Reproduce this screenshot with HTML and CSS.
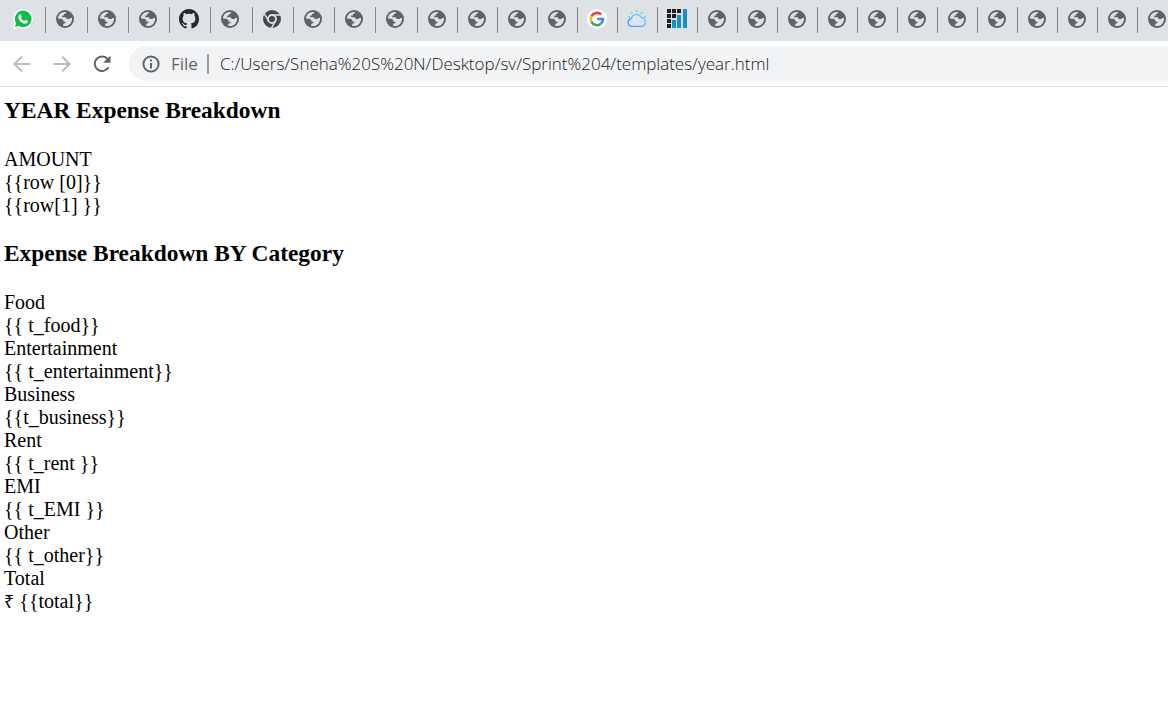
FILE: index.html
```html
<!DOCTYPE html>
<html lang="en">
<head>
<meta charset="utf-8">
<title>year.html</title>
<link rel="stylesheet" href="styles.css">
</head>
<body>
<svg class="sprite" aria-hidden="true">
  <symbol id="globe" viewBox="0 0 20 20">
    <circle cx="10" cy="10" r="9" fill="#5f6368"/>
    <path fill="#dee1e6" d="M2.900 9.600C3 6.200 5.800 3 9.700 2.900L11.200 3.100C11.100 4.500 10 4.900 9 5.100L8.900 6.600H7.200V8.200H10.200C11.200 8.200 11.500 8.900 11.600 10H13.900C14.700 10 15 9.500 15.300 9H17C17.500 13.400 14.200 17.100 10.200 17.100H8.200V15.400C8.300 14.400 9.400 14.300 10.400 14.200L10.500 12.700H8.800C8.400 10.700 7.300 9.800 5.700 9.700Z"/>
  </symbol>
</svg>
<header>
  <nav class="tabs" aria-label="Tabs">
    <button class="tab extra" aria-label="WhatsApp"><svg viewBox="0 0 20 20"><path fill="#fff" d="M10 0a10 10 0 1 1-4.600 18.900L.2 20l1.400-5A10 10 0 0 1 10 0Z"/><path fill="#0bc143" d="M10.200 1.600a8.300 8.300 0 1 1-4.300 15.400L2 18l1.100-3.800A8.300 8.300 0 0 1 10.200 1.600Z"/><path fill="#fff" d="M6.700 5.300h1.100l1 2.300-.9 1.300c.8 1.500 1.900 2.500 3.500 3.200l1.200-1.300 2.300 1.100c.1 1.800-1.200 2.700-2.600 2.700-3.600-.4-6.500-3.300-7-6.400 0-1.300.6-2.300 1.400-2.900Z"/></svg></button>
    <button class="tab extra" aria-label="Tab"><svg><use href="#globe"/></svg></button>
    <button class="tab wide" aria-label="Tab"><svg><use href="#globe"/></svg></button>
    <button class="tab wide" aria-label="Tab"><svg><use href="#globe"/></svg></button>
    <button class="tab wide" aria-label="GitHub"><svg viewBox="0 0 16 16"><path fill="#24292f" d="M8 0C3.580 0 0 3.580 0 8c0 3.540 2.290 6.530 5.470 7.590.4.070.55-.17.55-.38 0-.19-.01-.82-.01-1.490-2.010.37-2.530-.49-2.690-.94-.09-.23-.48-.94-.82-1.130-.28-.15-.68-.52-.01-.53.63-.01 1.080.58 1.230.82.72 1.210 1.870.87 2.330.66.07-.52.28-.87.51-1.070-1.780-.2-3.640-.89-3.640-3.950 0-.87.31-1.590.82-2.150-.08-.2-.36-1.020.08-2.120 0 0 .67-.21 2.200.82.64-.18 1.320-.27 2-.27s1.360.09 2 .27c1.530-1.040 2.200-.82 2.200-.82.44 1.100.16 1.920.08 2.120.51.56.82 1.270.82 2.150 0 3.070-1.870 3.750-3.650 3.950.29.25.54.73.54 1.480 0 1.070-.01 1.930-.01 2.200 0 .21.15.46.55.38A8.010 8.010 0 0 0 16 8c0-4.420-3.580-8-8-8Z"/></svg></button>
    <button class="tab extra" aria-label="Tab"><svg><use href="#globe"/></svg></button>
    <button class="tab wide" aria-label="Chrome"><svg viewBox="0 0 20 20"><circle cx="10" cy="10" r="9" fill="#45494d"/><circle cx="10" cy="10" r="4" fill="#45494d" stroke="#dee1e6" stroke-width="1.800"/><path d="M10 6H18.500M6.500 12 2.300 4.700M13.500 12 9.300 19.300" stroke="#dee1e6" stroke-width="1.500"/></svg></button>
    <button class="tab wide" aria-label="Tab"><svg><use href="#globe"/></svg></button>
    <button class="tab wide" aria-label="Tab"><svg><use href="#globe"/></svg></button>
    <button class="tab extra" aria-label="Tab"><svg><use href="#globe"/></svg></button>
    <button class="tab" aria-label="Tab"><svg><use href="#globe"/></svg></button>
    <button class="tab" aria-label="Tab"><svg><use href="#globe"/></svg></button>
    <button class="tab" aria-label="Tab"><svg><use href="#globe"/></svg></button>
    <button class="tab" aria-label="Tab"><svg><use href="#globe"/></svg></button>
    <button class="tab" aria-label="Google"><svg viewBox="0 0 20 20"><circle cx="10" cy="10" r="10" fill="#fff"/><g fill="none" stroke-width="2.600"><path stroke="#ea4335" d="M4.500 7.200A6.100 6.100 0 0 1 14.200 5.600"/><path stroke="#fbbc05" d="M4.500 12.800A6.100 6.100 0 0 1 4.500 7.200"/><path stroke="#34a853" d="M14 14.600A6.100 6.100 0 0 1 4.500 12.800"/><path stroke="#4285f4" d="M10.200 10H16A6.100 6.100 0 0 1 14 14.600"/></g></svg></button>
    <button class="tab" aria-label="Weather"><svg viewBox="0 0 20 20"><defs><linearGradient id="sky" x1="0" y1="1" x2="1" y2="0"><stop offset="0" stop-color="#4f86f7"/><stop offset="1" stop-color="#77dff0"/></linearGradient></defs><path fill="#d9e6f2" stroke="url(#sky)" stroke-width="1.300" d="M4.700 17.400a4 4 0 0 1-.3-7.900 5.300 5.300 0 0 1 9.900-1 4.600 4.600 0 0 1 .8 8.900Z"/><path fill="none" stroke="#63e3dc" stroke-width="1.500" d="M9.500 1v2.200M4 3l1.500 1.800M15.500 3 14 4.800M.8 7.500 3 8.300M19 7.500l-2.200.8"/></svg></button>
    <button class="tab" aria-label="Dashboard"><svg viewBox="0 0 20 20"><path fill="#1f1c1e" d="M0 0h4v4H0zM5 0h4v4H5zM10 0h4v4h-4zM0 5h4v4H0zM5 5h4v4H5zM0 10h4v4H0zM0 15h4v4H0z"/><path fill="#168fce" d="M5 11h4v8H5zM10 6h4v13h-4zM16 0h4v19h-4z"/></svg></button>
    <button class="tab" aria-label="Tab"><svg><use href="#globe"/></svg></button>
    <button class="tab" aria-label="Tab"><svg><use href="#globe"/></svg></button>
    <button class="tab" aria-label="Tab"><svg><use href="#globe"/></svg></button>
    <button class="tab" aria-label="Tab"><svg><use href="#globe"/></svg></button>
    <button class="tab" aria-label="Tab"><svg><use href="#globe"/></svg></button>
    <button class="tab" aria-label="Tab"><svg><use href="#globe"/></svg></button>
    <button class="tab" aria-label="Tab"><svg><use href="#globe"/></svg></button>
    <button class="tab" aria-label="Tab"><svg><use href="#globe"/></svg></button>
    <button class="tab" aria-label="Tab"><svg><use href="#globe"/></svg></button>
    <button class="tab" aria-label="Tab"><svg><use href="#globe"/></svg></button>
    <button class="tab" aria-label="Tab"><svg><use href="#globe"/></svg></button>
    <button class="tab" aria-label="Tab"><svg><use href="#globe"/></svg></button>
  </nav>
  <div class="toolbar">
    <button class="tool" aria-label="Back"><svg class="muted" viewBox="0 0 20 20"><path d="M18.500 10H3M10 2.500 2.500 10l7.500 7.500"/></svg></button>
    <button class="tool" aria-label="Forward"><svg class="muted" viewBox="0 0 20 20"><path d="M1.500 10H17M10 2.500l7.500 7.500-7.500 7.500"/></svg></button>
    <button class="tool" aria-label="Reload"><svg class="strong" viewBox="0 0 20 20"><path d="M16.500 13.200A7.300 7.300 0 1 1 15.700 5.100"/><path class="solid" d="M18.500 1.500v7.300h-7.300Z"/></svg></button>
    <form class="address">
      <svg class="info" viewBox="0 0 20 20"><circle cx="10" cy="10" r="7.600"/><path d="M10 9v5.500M10 5.500v2"/></svg>
      <label class="scheme" for="url">File</label>
      <input id="url" class="url" type="text" value="C:/Users/Sneha%20S%20N/Desktop/sv/Sprint%204/templates/year.html">
    </form>
  </div>
</header>
<main class="page">
  <h3>YEAR Expense Breakdown</h3>
  <div>AMOUNT</div>
  <div>{{row [0]}}</div>
  <div>{{row[1] }}</div>
  <h3>Expense Breakdown BY Category</h3>
  <div>Food</div>
  <div>{{ t_food}}</div>
  <div>Entertainment</div>
  <div>{{ t_entertainment}}</div>
  <div>Business</div>
  <div>{{t_business}}</div>
  <div>Rent</div>
  <div>{{ t_rent }}</div>
  <div>EMI</div>
  <div>{{ t_EMI }}</div>
  <div>Other</div>
  <div>{{ t_other}}</div>
  <div>Total</div>
  <div><span class="rupee">₹</span> {{total}}</div>
</main>
</body>
</html>
```
FILE: styles.css
```css
* { box-sizing: border-box; }
body { margin: 0; background: #fff; color: #000; }
button { border: 0; background: none; padding: 0; }
svg { display: block; }
.sprite { display: none; }

.tabs { display: flex; height: 41px; padding: 7px 0 8px 4px; background: #dee1e6; overflow: hidden; }
.tab { flex: none; width: 40px; height: 26px; padding-left: 9px; border-right: 1px solid #85888d; }
.tab.wide { width: 41px; }
.tab.extra { width: 42px; }
.tab svg { width: 20px; height: 20px; margin-bottom: 2px; }

.toolbar { display: flex; align-items: center; height: 46px; padding-left: 12px; border-bottom: 1px solid #dadce0; }
.tool { flex: none; width: 40px; }
.tool svg { width: 20px; height: 20px; fill: none; stroke-width: 2; }
.muted { stroke: #babcbe; }
.strong { stroke: #5f6368; }
.strong .solid { fill: #5f6368; stroke: none; }
.address { display: flex; flex: 1; align-items: center; height: 35px; margin-left: -3px; padding-left: 12px; border-radius: 18px 0 0 18px; background: #f1f3f4; font: 300 17px/24px "Open Sans", sans-serif; }
.info { width: 20px; height: 20px; fill: none; stroke: #5f6368; stroke-width: 2; }
.scheme { margin-left: 10px; padding-right: 9px; color: #5f6368; font-weight: 400; }
.url { flex: 1; min-width: 0; height: 20px; padding: 0 0 0 11px; border: 0; border-left: 2px solid #9a9da1; background: none; color: #202124; font: inherit; outline: 0; }

.page { padding: 10px 4px; font: 20px/23px "Liberation Serif", serif; }
h3 { margin: 23px 0 24px; line-height: 27px; }
h3:first-child { margin-top: 0; }
.rupee { font-family: "Noto Sans", sans-serif; font-size: 18px; line-height: 18px; }
```
